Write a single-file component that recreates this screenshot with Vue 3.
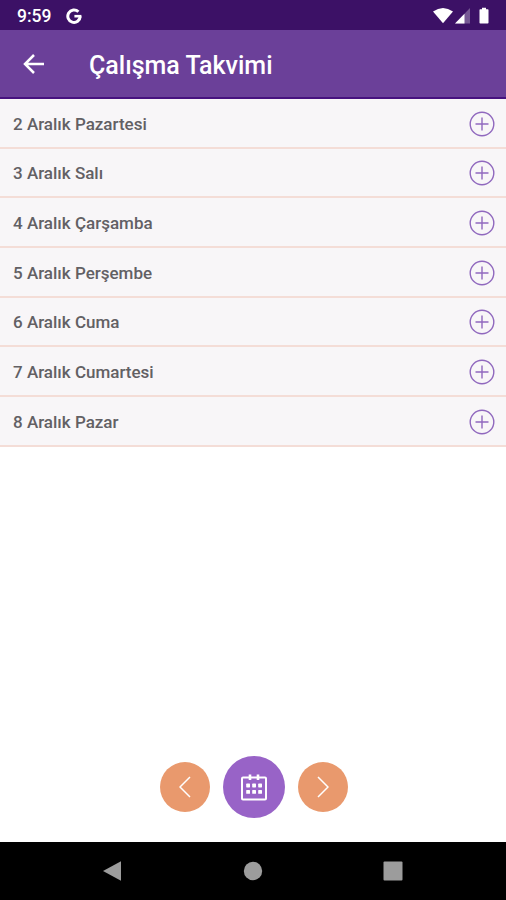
<template>
  <div class="screen">
    <div class="statusBar">
      <span class="time">9:59</span>
      <svg class="google" width="16" height="16" viewBox="0 0 16 16">
        <path d="M12.4 3.8A6.2 6.2 0 1 0 14.2 8.4" />
        <path class="bar" d="M8.4 8.2H15.4" />
      </svg>
      <svg class="signals" width="58" height="18" viewBox="0 0 58 18">
        <path d="M0 4.6Q10 -2.6 20 4.6L10 16.2Z" />
        <path class="faint" d="M37 1V16.5H22Z" />
        <path d="M31.5 6.7V16.5H22Z" />
        <path d="M47.2 2.2H49V0.8h4v1.4h1.8q.7 0 .7.8V15.7q0 .8-.8.8h-7.4q-.8 0-.8-.8V3q0-.8.7-.8Z" />
      </svg>
    </div>
    <div class="header">
      <svg class="back" width="22" height="20" viewBox="0 0 22 20">
        <path d="M21 10H2M11 1L2 10L11 19" />
      </svg>
      <span class="title">Çalışma Takvimi</span>
    </div>
    <div class="list">
      <div v-for="day in days" :key="day" class="item">
        <span>{{ day }}</span>
        <svg width="26" height="26" viewBox="0 0 26 26">
          <circle cx="13" cy="13" r="11.8" />
          <path d="M13 6.5V19.5M6.5 13H19.5" />
        </svg>
      </div>
    </div>
    <div class="actions">
      <div class="round">
        <svg width="12" height="22" viewBox="0 0 12 22">
          <path d="M11 1L1 11L11 21" />
        </svg>
      </div>
      <div class="round calendar">
        <svg width="26" height="27" viewBox="0 0 26 27">
          <rect class="frame" x="1" y="3.4" width="24" height="22" rx="1" />
          <path class="rings" d="M9 0.5V6M17 0.5V6" />
          <rect v-for="n in 6" :key="n" class="dot" :x="5.2 + ((n - 1) % 3) * 6" :y="n > 3 ? 16 : 9.6" width="3.8" height="3.8" rx="0.6" />
        </svg>
      </div>
      <div class="round">
        <svg width="12" height="22" viewBox="0 0 12 22">
          <path d="M1 1L11 11L1 21" />
        </svg>
      </div>
    </div>
    <div class="navBar">
      <svg width="20" height="22" viewBox="0 0 20 22">
        <path d="M19 1.2V20.8L1 11Z" />
      </svg>
      <svg width="20" height="20" viewBox="0 0 20 20">
        <circle cx="10" cy="10" r="9.2" />
      </svg>
      <svg width="20" height="20" viewBox="0 0 20 20">
        <rect x="0.5" y="0.5" width="19" height="19" rx="1" />
      </svg>
    </div>
  </div>
</template>

<script setup>
import { ref } from "vue";

const days = ref([
  "2 Aralık Pazartesi",
  "3 Aralık Salı",
  "4 Aralık Çarşamba",
  "5 Aralık Perşembe",
  "6 Aralık Cuma",
  "7 Aralık Cumartesi",
  "8 Aralık Pazar",
]);
</script>

<style scoped>
.screen {
  display: flex;
  flex-direction: column;
  width: 100%;
  height: 100vh;
  background-color: #fff;
  font-family: Roboto, "Noto Sans", sans-serif;
}

svg {
  display: block;
  flex: none;
}

.statusBar {
  display: flex;
  align-items: center;
  box-sizing: border-box;
  height: 30px;
  padding: 1px 15px 0 17px;
  background-color: #3c1166;
  color: #fff;
}

.time {
  width: 49px;
  padding-top: 1px;
  font-size: 17.5px;
  font-weight: 500;
}

.google path {
  fill: none;
  stroke: #fff;
  stroke-width: 3;
}

.google .bar {
  stroke-width: 2.6;
}

.signals {
  margin-left: auto;
  fill: #fff;
}

.faint {
  opacity: 0.3;
}

.header {
  display: flex;
  align-items: center;
  box-sizing: border-box;
  height: 69px;
  padding: 0 23px;
  border-bottom: 2px solid #47127f;
  background-color: #6b4099;
}

.back {
  fill: none;
  stroke: #fff;
  stroke-width: 2.5;
}

.title {
  margin: 5px 0 0 44px;
  color: #fff;
  font-size: 25px;
  font-weight: 500;
  line-height: 30px;
}

.item {
  display: flex;
  justify-content: space-between;
  align-items: center;
  box-sizing: border-box;
  height: 49.7px;
  padding: 1.6px 11px 0 13px;
  border-bottom: 2px solid #f4ddd7;
  background-color: #f8f6f8;
  color: #626064;
  font-size: 17px;
  font-weight: 500;
}

.item svg {
  fill: none;
  stroke: #9068be;
  stroke-width: 1.4;
}

.actions {
  display: flex;
  justify-content: center;
  align-items: center;
  gap: 13px;
  margin: auto 0 24px;
  padding-left: 2px;
}

.round {
  display: flex;
  justify-content: center;
  align-items: center;
  width: 50px;
  height: 50px;
  border-radius: 50%;
  background-color: #e9996d;
}

.round svg {
  fill: none;
  stroke: #fff;
  stroke-width: 1.5;
}

.calendar {
  width: 62px;
  height: 62px;
  background-color: #9863c7;
}

.calendar .frame {
  stroke-width: 2;
}

.calendar .rings {
  stroke-width: 2.6;
}

.calendar .dot {
  fill: #fff;
  stroke: none;
}

.navBar {
  display: flex;
  justify-content: space-between;
  align-items: center;
  box-sizing: border-box;
  height: 58px;
  padding: 0 103px 0 102px;
  background-color: #000;
  fill: #9c9c9c;
}
</style>

<style>
body {
  overflow: hidden;
}
</style>
